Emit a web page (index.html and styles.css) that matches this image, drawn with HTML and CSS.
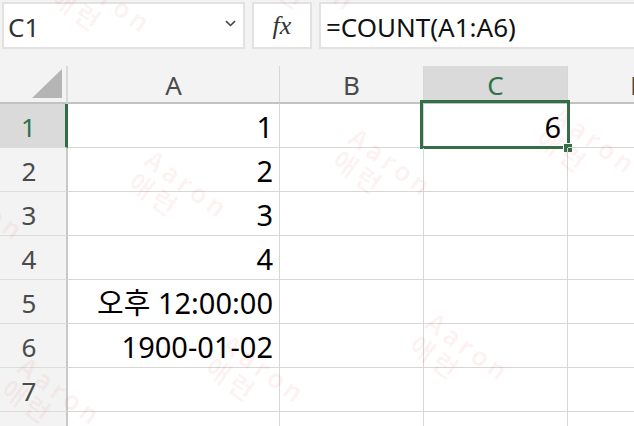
FILE: index.html
```html
<!DOCTYPE html>
<html lang="ko">
<head>
<meta charset="utf-8">
<title>COUNT</title>
<link rel="stylesheet" href="styles.css">
</head>
<body>
<div class="app">
  <div class="toolbar">
    <div class="box namebox">
      <span class="ref">C1</span>
      <svg class="chev" width="11" height="7" viewBox="0 0 11 7"><path d="M1 1.2 L5.5 5.5 L10 1.2" fill="none" stroke="#444" stroke-width="1.6"/></svg>
    </div>
    <div class="box fxbox"><span class="fx">fx</span></div>
    <div class="box formula"><span class="ftext">=COUNT(A1:A6)</span></div>
  </div>
  <div class="sheet">
    <div class="corner"><svg width="30" height="29" viewBox="0 0 30 29"><polygon points="30,0 30,29 0,29" fill="#b5b5b5"/></svg></div>
    <div class="colh">A</div>
    <div class="colh">B</div>
    <div class="colh sel">C</div>
    <div class="colh">D</div>

    <div class="rowh sel">1</div>
    <div class="cell num">1</div>
    <div class="cell"></div>
    <div class="cell num active">6<span class="selbox"></span><span class="handle"></span></div>
    <div class="cell"></div>

    <div class="rowh">2</div>
    <div class="cell num">2</div>
    <div class="cell"></div><div class="cell"></div><div class="cell"></div>

    <div class="rowh">3</div>
    <div class="cell num">3</div>
    <div class="cell"></div><div class="cell"></div><div class="cell"></div>

    <div class="rowh">4</div>
    <div class="cell num">4</div>
    <div class="cell"></div><div class="cell"></div><div class="cell"></div>

    <div class="rowh">5</div>
    <div class="cell num">오후 12:00:00</div>
    <div class="cell"></div><div class="cell"></div><div class="cell"></div>

    <div class="rowh">6</div>
    <div class="cell num">1900-01-02</div>
    <div class="cell"></div><div class="cell"></div><div class="cell"></div>

    <div class="rowh">7</div>
    <div class="cell"></div>
    <div class="cell"></div><div class="cell"></div><div class="cell"></div>

    <div class="rowh">8</div>
    <div class="cell"></div>
    <div class="cell"></div><div class="cell"></div><div class="cell"></div>
  </div>
  <div class="marks" aria-hidden="true">
    <div class="wm w1">Aaron<br>애런</div>
    <div class="wm w2">Aaron<br>애런</div>
    <div class="wm w3">Aaron<br>애런</div>
    <div class="wm w4">Aaron<br>애런</div>
    <div class="wm w5">Aaron<br>애런</div>
    <div class="wm w6">Aaron<br>애런</div>
    <div class="wm w7">Aaron<br>애런</div>
    <div class="wm w8">Aaron<br>애런</div>
    <div class="wm w9">Aaron<br>애런</div>
    <div class="wm w10">Aaron<br>애런</div>
  </div>
</div>
</body>
</html>
```
FILE: styles.css
```css
html, body {
  margin: 0;
  padding: 0;
  background: #ffffff;
}
body {
  font-family: "Noto Sans", "Noto Sans CJK KR", sans-serif;
}
.app {
  position: relative;
  width: 634px;
  height: 426px;
  overflow: hidden;
  background: #f3f3f3;
}
.toolbar {
  height: 66px;
  box-sizing: border-box;
  padding: 2px 0 0 2px;
  display: flex;
  gap: 7px;
}
.box {
  flex: none;
  height: 47px;
  box-sizing: border-box;
  background: #ffffff;
  border: 2px solid #e2e2e2;
  display: flex;
  align-items: center;
}
.namebox {
  width: 243px;
  padding: 0 7px 0 4px;
  justify-content: space-between;
}
.ref {
  font-size: 26px;
  color: #333333;
  line-height: 1;
  padding-top: 2px;
}
.chev {
  display: block;
  margin-top: -4px;
}
.fxbox {
  width: 60px;
  justify-content: center;
}
.fx {
  font-family: "Liberation Serif", "DejaVu Serif", serif;
  font-style: italic;
  font-size: 26px;
  color: #333333;
  line-height: 1;
}
.formula {
  width: 340px;
  padding-left: 5px;
}
.ftext {
  font-size: 26px;
  color: #111111;
  line-height: 1;
  padding-top: 2px;
}
.sheet {
  display: grid;
  grid-template-columns: 68px 212px 144px 144px 144px;
  grid-template-rows: 38px repeat(8, 44px);
  width: 712px;
  background: #ffffff;
}
.corner {
  background: #f3f3f3;
  border-bottom: 2px solid #c2c2c2;
  border-right: 2px solid #dadada;
  box-sizing: border-box;
  display: flex;
  justify-content: flex-end;
  align-items: flex-end;
  padding: 0 4px 4px 0;
}
.corner svg {
  display: block;
}
.colh {
  background: #f3f3f3;
  border-bottom: 2px solid #c2c2c2;
  border-right: 1px solid #d6d6d6;
  box-sizing: border-box;
  display: flex;
  align-items: center;
  justify-content: center;
  font-size: 26px;
  color: #4a4a4a;
  line-height: 1;
  padding-top: 2px;
}
.colh.sel {
  background: #dadada;
  color: #2f7148;
}
.rowh {
  background: #f3f3f3;
  border-right: 2px solid #c8c8c8;
  border-bottom: 1px solid #dcdcdc;
  box-sizing: border-box;
  display: flex;
  align-items: center;
  justify-content: center;
  padding-right: 8px;
  font-size: 26px;
  color: #4a4a4a;
  line-height: 1;
  padding-top: 2px;
}
.rowh.sel {
  background: #dadada;
  color: #2f7148;
  border-right: 3px solid #2f6e45;
}
.cell {
  position: relative;
  border-right: 1px solid #d6d6d6;
  border-bottom: 1px solid #d6d6d6;
  box-sizing: border-box;
}
.num {
  display: flex;
  align-items: center;
  justify-content: flex-end;
  padding: 2px 6px 0 0;
  font-size: 29px;
  color: #000000;
  line-height: 1;
  white-space: nowrap;
}
.selbox {
  position: absolute;
  left: -4px;
  top: -4px;
  width: 150px;
  height: 49px;
  box-sizing: border-box;
  border: 3px solid #346e46;
}
.handle {
  position: absolute;
  left: 139px;
  top: 39px;
  width: 8px;
  height: 8px;
  background: #346e46;
  border: 1px solid #ffffff;
}
.marks {
  position: absolute;
  left: 0;
  top: 0;
  width: 634px;
  height: 426px;
  pointer-events: none;
}
.wm {
  position: absolute;
  width: 120px;
  height: 64px;
  margin-left: -60px;
  margin-top: -32px;
  transform: rotate(36deg);
  font-family: "Noto Sans CJK KR", sans-serif;
  font-weight: 700;
  font-size: 26px;
  line-height: 28px;
  letter-spacing: 4px;
  color: rgba(235, 60, 60, 0.06);
}
.w1 { left: 187px; top: 205px; }
.w2 { left: 391px; top: 183px; }
.w3 { left: 595px; top: 161px; }
.w4 { left: -17px; top: 227px; }
.w5 { left: 110px; top: 20px; }
.w6 { left: 314px; top: -2px; }
.w7 { left: 518px; top: -24px; }
.w8 { left: 60px; top: 412px; }
.w9 { left: 264px; top: 390px; }
.w10 { left: 468px; top: 368px; }
```
